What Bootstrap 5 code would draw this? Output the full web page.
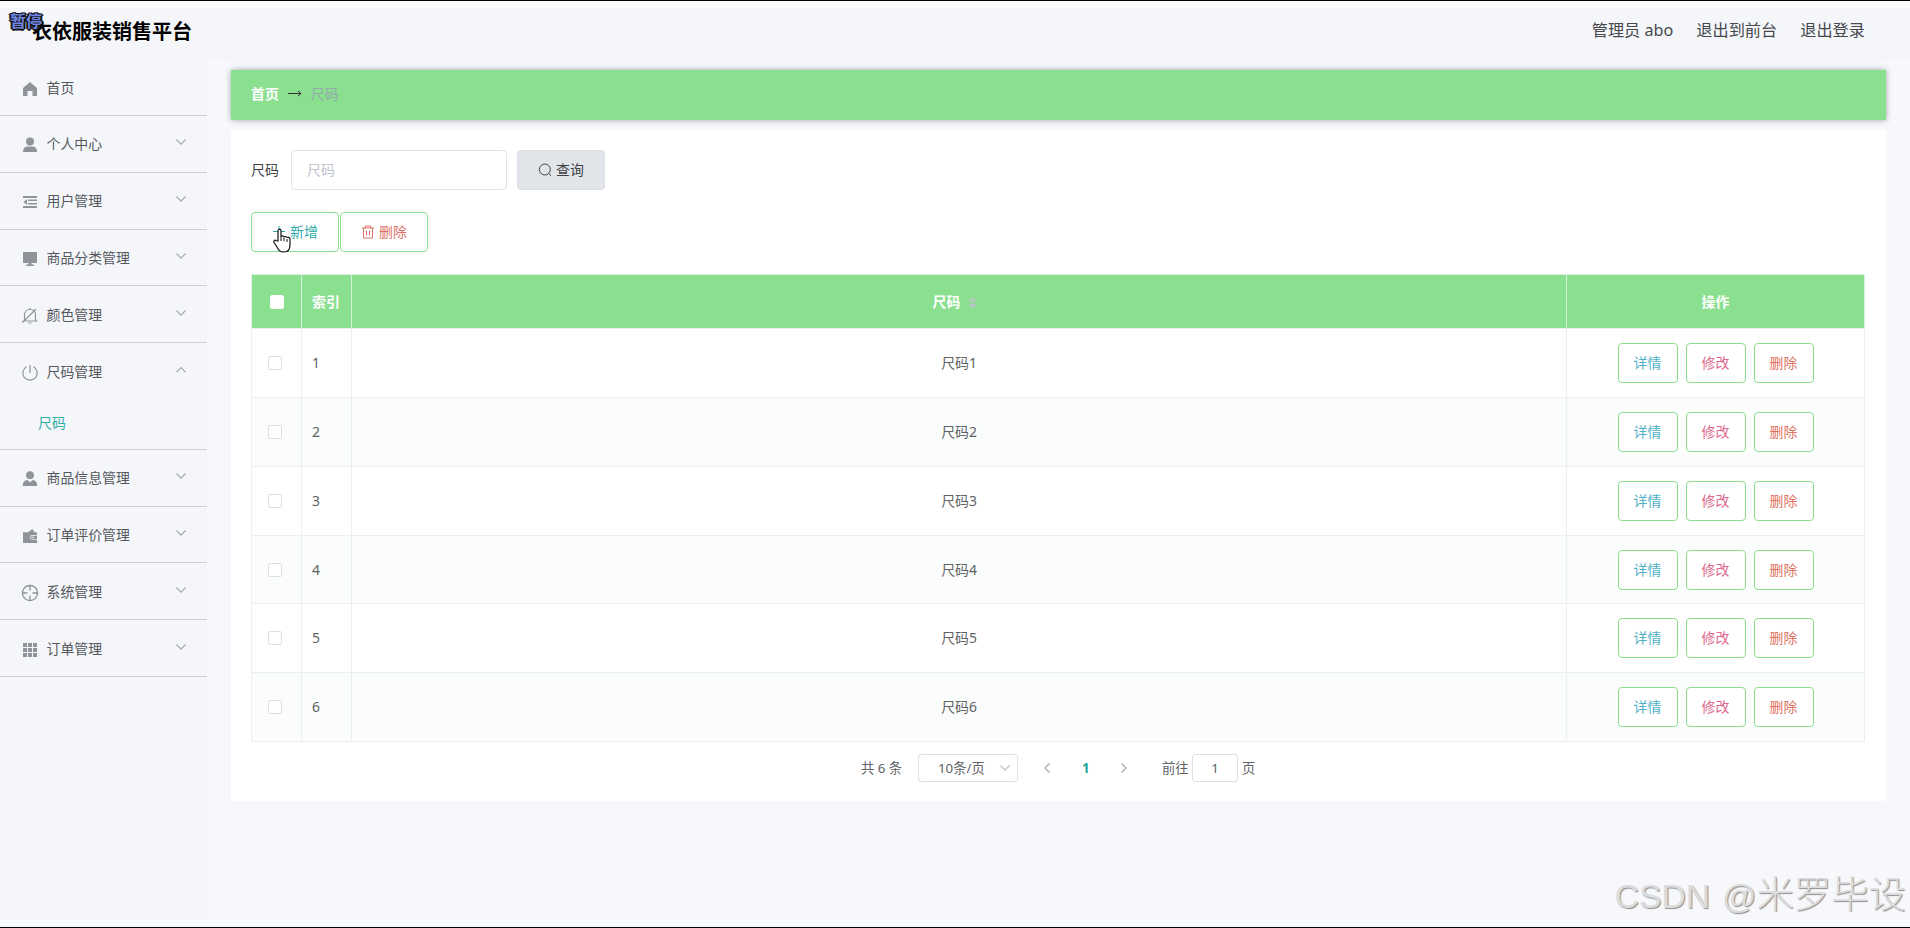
<!DOCTYPE html>
<html lang="zh-CN">
<head>
<meta charset="utf-8">
<title>衣依服装销售平台</title>
<link href="https://cdn.jsdelivr.net/npm/bootstrap@5.3.0/dist/css/bootstrap.min.css" rel="stylesheet">
<style>
:root{--green:#8ae08f;--line:#ebeef5}
body{font:13.9px/20px "Noto Sans","Noto Sans CJK SC",sans-serif;color:#606266;background:#f7f8fb;height:928px;overflow:hidden;border-top:1px solid #000;border-bottom:1px solid #000}
.stripe{height:7px;background:#f9fafc;border-bottom:1px solid #fff;flex:none}
.stripe.low{border-bottom:0;border-top:1px solid #fff;background:#f5f9fb}
.topbar{height:52px;background:#f4f6fa;padding:0 45px 7px 32px;flex:none}
.brand{font-size:20px;font-weight:700;color:#000;line-height:28px;padding-top:2px}
.topbar nav{gap:23px;margin-top:-2px}
.topbar a{font-size:16.2px;color:#46484c;text-decoration:none}
.side{width:207px;background:#f4f6fa;flex:none}
.side .entry{height:56.8px;border-bottom:1px solid #ccced3;padding:1px 21px 0;color:#55585d}
.side .entry:first-child{height:56px;padding-top:0}
.side .entry.open{border-bottom:0;padding-top:0}
.side .sub{height:49.8px;border-bottom:1px solid #ccced3;padding:13px 0 0 38px;color:#2fb0a5}
.side svg.ic{width:18px;height:18px;fill:#909399;margin-right:7.500px;position:relative;top:1px}
.side svg.ar{width:10px;height:10px;margin-bottom:4px;margin-left:auto}
.ar{fill:none;stroke:#a3a6ac;stroke-width:1.1}
.work{padding:10px 24px 0;min-width:0}
.crumb{height:50px;background:var(--green);box-shadow:0 0 6px rgba(0,0,0,.35);padding:0 20px 1.500px;color:#303133}
.panel{background:#fff;margin-top:10px;height:671px;padding:20px 20px 0}
.box{border:1px solid #dfe3ea;border-radius:4px;height:40px;background:#fff}
.field{width:216px;padding:0 15px;color:#c0c4cc}
.act{border:1px solid var(--green);border-radius:4px;height:40px;width:88px;font-size:13.9px;padding:0;background:#fff}
.act.query{background:#e1e5ea;border-color:#dcdfe6;color:#404144}
.act.row-act{width:60px;height:40px}
.teal{color:#2eaaa8}.red{color:#e07066}
.info{color:#4fb0c6}.rose{color:#dd6a8d}.brick{color:#e07361}
.act svg{fill:none;stroke:currentColor;stroke-width:1}
.grid-table{table-layout:fixed;width:1614px;border-collapse:separate;border-spacing:0;border-left:1px solid var(--line);border-top:1px solid #d5f1da}
.grid-table th,.grid-table td{border-right:1px solid var(--line);border-bottom:1px solid var(--line);padding:0 10px;vertical-align:middle}
.grid-table th{background:var(--green);color:#fff;font-weight:700;height:54px;border-right-color:#d5f1da}
.grid-table td{height:69px}
.grid-table tr:nth-child(4) td{height:68px}
.grid-table tr:nth-child(even) td{background:#fafdfc}
.tick{display:block;width:14px;height:14px;border:1px solid #dcdfe6;border-radius:2px;background:#fff;margin-left:6px}
th .tick{margin-left:8px;border-color:#fff}
.pager{font-size:13.3px;height:28px;margin-top:12px}
.cap{border:1px solid #dcdfe6;border-radius:3px;height:28px}
.wm{position:absolute;right:4px;bottom:2px;font:33.6px/56px "Liberation Sans","Noto Sans CJK SC",sans-serif;color:#dcdcdd;text-shadow:1px 1px 1px #8d8d8d;white-space:nowrap;word-spacing:3px}
.wm span{font-size:37.4px;font-family:"Noto Sans CJK SC",sans-serif;font-weight:300}
.pause{position:absolute;left:10px;top:10px;font-size:16px;line-height:20px;font-weight:700;color:#6f84e0;text-shadow:-1px -1px #111,1px -1px #111,-1px 1px #111,1px 1px #111,0 2px #222,2px 0 #222,-2px 0 #222}
.hand{position:absolute;left:272px;top:227px}
</style>
</head>
<body class="position-relative d-flex flex-column">
<svg class="d-none">
<symbol id="down" viewBox="0 0 10 10"><path d="M.5 2.500 5 7.200 9.500 2.500"/></symbol>
<symbol id="up" viewBox="0 0 10 10"><path d="M.5 7.200 5 2.500 9.500 7.200"/></symbol>
</svg>
<div class="stripe"></div>
<header class="topbar d-flex align-items-center justify-content-between">
  <div class="brand">衣依服装销售平台</div>
  <nav class="d-flex"><a href="#">管理员 abo</a><a href="#">退出到前台</a><a href="#">退出登录</a></nav>
</header>
<div class="d-flex flex-grow-1" style="min-height:0">
<aside class="side">
  <div class="entry d-flex align-items-center"><svg class="ic" viewBox="0 0 18 18"><path d="M9 2 2 8v8h4.500v-5h5v5H16V8z"/></svg>首页</div>
  <div class="entry d-flex align-items-center"><svg class="ic" viewBox="0 0 18 18"><circle cx="9" cy="5.500" r="4"/><path d="M2 16c0-4 2-5.500 5-5.500h4c3 0 5 1.500 5 5.500z"/></svg>个人中心<svg class="ar"><use href="#down"/></svg></div>
  <div class="entry d-flex align-items-center"><svg class="ic" viewBox="0 0 18 18"><path d="M2 3h14v2H2zM7 6.500h9V8H7zM7 10h9v1.500H7zM2 13h14v2H2zM6 6v6L2.500 9z"/></svg>用户管理<svg class="ar"><use href="#down"/></svg></div>
  <div class="entry d-flex align-items-center"><svg class="ic" viewBox="0 0 18 18"><path d="M2 2h14v11H2zM7.500 13h3v1.500H13V16H5v-1.500h2.500z"/></svg>商品分类管理<svg class="ar"><use href="#down"/></svg></div>
  <div class="entry d-flex align-items-center"><svg class="ic" viewBox="0 0 18 18"><path d="M3.500 14V8C3.500 4.500 6 2.500 9 2.500S14.500 4.500 14.500 8v6M1.500 14h15M1.500 15.500 15 2M9 1v1.500M7.500 16h3" fill="none" stroke="#909399" stroke-width="1.200"/></svg>颜色管理<svg class="ar"><use href="#down"/></svg></div>
  <div class="entry open d-flex align-items-center"><svg class="ic" viewBox="0 0 18 18"><path d="M5.500 2.700a7.200 7.200 0 1 0 7 0M9 1v8" fill="none" stroke="#909399" stroke-width="1.200"/></svg>尺码管理<svg class="ar"><use href="#up"/></svg></div>
  <div class="sub">尺码</div>
  <div class="entry d-flex align-items-center"><svg class="ic" viewBox="0 0 18 18"><circle cx="9" cy="5.200" r="3.900"/><path d="M1.800 16c0-4 1.500-5.500 4.500-6L9 12.500l2.700-2.500c3 .5 4.500 2 4.500 6z"/></svg>商品信息管理<svg class="ar"><use href="#down"/></svg></div>
  <div class="entry d-flex align-items-center"><svg class="ic" viewBox="0 0 18 18"><path d="M2 5.200h5L11.500 2l2 3.200H16V8h-4.500a2.300 2.300 0 0 0 0 4.800H16V16H2z"/><path d="M11.500 8.800H16v3.200h-4.500a1.600 1.600 0 0 1 0-3.200"/><circle cx="12" cy="10.400" r=".8" fill="#f4f6fa"/></svg>订单评价管理<svg class="ar"><use href="#down"/></svg></div>
  <div class="entry d-flex align-items-center"><svg class="ic" viewBox="0 0 18 18"><path d="M9 1.500a7.500 7.500 0 1 0 .01 0M9 1.500v5M9 11.500v5M1.500 9h5M11.500 9h5" fill="none" stroke="#909399" stroke-width="1.300"/></svg>系统管理<svg class="ar"><use href="#down"/></svg></div>
  <div class="entry d-flex align-items-center"><svg class="ic" viewBox="0 0 18 18"><path d="M2 2h4v4H2zM7 2h4v4H7zM12 2h4v4h-4zM2 7h4v4H2zM7 7h4v4H7zM12 7h4v4h-4zM2 12h4v4H2zM7 12h4v4H7zM12 12h4v4h-4z"/></svg>订单管理<svg class="ar"><use href="#down"/></svg></div>
</aside>
<main class="work flex-grow-1">
  <div class="crumb d-flex align-items-center"><b class="text-white">首页</b><svg width="14" height="8" viewBox="0 0 14 8" fill="none" stroke="#303133" style="margin:0 9px"><path d="M0 3.500h13M10 1l3 2.500L10 6"/></svg><span style="color:#93a9ad">尺码</span></div>
  <section class="panel">
    <div class="d-flex align-items-center"><span style="width:40px;color:#404246">尺码</span><div class="box field d-flex align-items-center">尺码</div>
      <button class="act query d-flex align-items-center justify-content-center" style="margin-left:10px"><svg width="14" height="14" style="margin-right:4px"><circle cx="6.800" cy="6.500" r="5.500"/><path d="m10.700 10.500 2.300 2.300"/></svg>查询</button></div>
    <div class="d-flex" style="margin-top:22px;gap:1px"><button class="act teal d-flex align-items-center justify-content-center"><svg width="14" height="14" style="margin-right:4px"><path d="M1 6.500h12M7 1v12"/></svg>新增</button>
      <button class="act red d-flex align-items-center justify-content-center"><svg width="14" height="14" style="margin-right:4px"><path d="M1 3h12M4.500 3V1h5v2M2.500 3v10h9V3M5.500 5.500v5M8.500 5.500v5"/></svg>删除</button></div>
    <table class="grid-table" style="margin-top:22px">
      <colgroup><col style="width:50px"><col style="width:50px"><col style="width:1215px"><col style="width:298px"></colgroup>
      <thead><tr><th><i class="tick"></i></th><th>索引</th><th class="text-center">尺码<svg width="9" height="12" viewBox="0 0 9 12" fill="#b4c9bf" style="margin:0 8px 0 8px"><path d="M0 5.200 4.500 0 9 5.200zM0 6.800h9L4.500 12z"/></svg></th><th class="text-center">操作</th></tr></thead>
      <tbody id="rows"></tbody>
    </table>
    <div class="pager d-flex align-items-center" style="padding-left:610px"><span style="width:57px">共 6 条</span>
      <div class="cap d-flex align-items-center" style="width:100px;padding:0 7px 0 19px">10条/页<svg class="ar ms-auto" width="10" height="10" style="opacity:.7"><use href="#down"/></svg></div>
      <svg class="ar" width="8" height="10" style="margin-left:25px;stroke:#b4b8c0;stroke-width:1.600"><path d="M6.500.5 2 5l4.500 4.500"/></svg>
      <b style="width:9px;margin-left:31px;color:#25a497">1</b>
      <svg class="ar" width="8" height="10" style="margin-left:29px;stroke:#b4b8c0;stroke-width:1.600"><path d="M1.500.5 6 5 1.500 9.500"/></svg>
      <span style="margin-left:34px;width:30px">前往</span><div class="cap text-center" style="width:46px;line-height:26px">1</div><span style="margin-left:4px">页</span></div>
  </section>
</main>
</div>
<div class="stripe low"></div>
<div class="pause">暂停</div>
<svg class="hand" width="20" height="25" viewBox="0 0 20 25"><path d="M6 13V2.800C6 .6 9 .6 9 2.800V9c0-1.500 3-1.500 3 .5 0-1.500 3-1.300 3 .6 0-1.200 3-1.200 3 1V17c0 4-2 7-6 7-4.500 0-5.500-2-7-5l-3-4.500c-1-2 1-3 2.300-1.700z" fill="#fff" stroke="#111" stroke-width="1.200"/><path d="M9 9v4M12 10v3M15 11v3" stroke="#111"/></svg>
<div class="wm">CSDN @<span>米罗毕设</span></div>
<script>
document.getElementById('rows').innerHTML = [1,2,3,4,5,6].map(n => `<tr><td><i class="tick"></i></td><td>${n}</td><td class="text-center">尺码${n}</td><td><div class="d-flex justify-content-center" style="gap:8px"><button class="act row-act info">详情</button><button class="act row-act rose">修改</button><button class="act row-act brick">删除</button></div></td></tr>`).join('');
</script>
<script src="https://cdn.jsdelivr.net/npm/bootstrap@5.3.0/dist/js/bootstrap.bundle.min.js"></script>
</body>
</html>
